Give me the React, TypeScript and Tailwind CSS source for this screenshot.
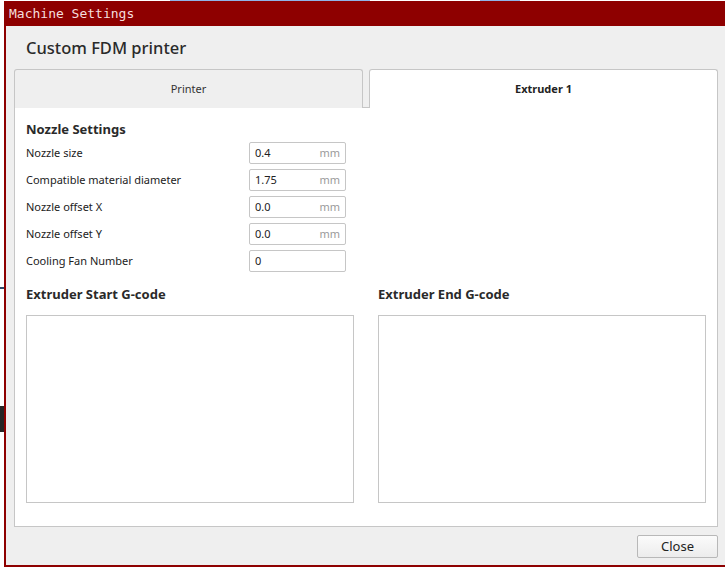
import React from "react";

const rows = [
  { label: "Nozzle size", value: "0.4", unit: "mm" },
  { label: "Compatible material diameter", value: "1.75", unit: "mm" },
  { label: "Nozzle offset X", value: "0.0", unit: "mm" },
  { label: "Nozzle offset Y", value: "0.0", unit: "mm" },
  { label: "Cooling Fan Number", value: "0", unit: "" },
];

export default function App() {
  return (
    <div
      className="relative w-[725px] h-[568px] overflow-hidden bg-white"
      style={{ fontFamily: '"Noto Sans", "Open Sans", sans-serif' }}
    >
      {/* desktop bits behind the window */}
      <div className="absolute left-[170px] top-0 w-[200px] h-px bg-[#8fb3e8]" />
      <div className="absolute left-[480px] top-0 w-[40px] h-px bg-[#8fb3e8]" />
      <div className="absolute left-0 top-[287px] w-[4px] h-[2px] bg-[#2c4a6a]" />
      <div className="absolute left-0 top-[406px] w-[4px] h-[26px] bg-[#262626]" />

      <div className="absolute left-[4px] top-[1px] w-[740px] h-[566px] flex flex-col border-l-2 border-b-2 border-[#8e0000] bg-[#efefef]">
        <div className="h-[25px] shrink-0 bg-[#8e0000] flex items-center pl-[3px]">
          <span
            className="text-[13px] text-[#f4dede] leading-none"
            style={{ fontFamily: '"DejaVu Sans Mono", monospace' }}
          >
            Machine Settings
          </span>
        </div>

        <div className="flex-1 flex flex-col pl-[8px] w-[712px]">
          <div className="h-[43px] flex items-center pl-[12px] pt-[1px]">
            <span className="text-[16.5px] font-medium text-[#2a2a2a] leading-none">Custom FDM printer</span>
          </div>

          {/* Tabs */}
          <div className="flex h-[39px] w-[704px] shrink-0 items-end">
            <div className="w-[349px] shrink-0 h-[39px] bg-[#efefef] border border-b-0 border-[#c6c6c6] rounded-t-[3px] flex items-center justify-center text-[11px] text-[#333]">
              Printer
            </div>
            <div className="w-[6px] shrink-0 h-full border-b border-[#c6c6c6]" />
            <div className="w-[349px] shrink-0 h-[39px] bg-white border border-b-0 border-[#c6c6c6] rounded-t-[3px] flex items-center justify-center text-[11px] font-bold text-[#222]">
              Extruder 1
            </div>
          </div>

          {/* Panel */}
          <div className="w-[704px] h-[419px] shrink-0 bg-white border border-t-0 border-[#c6c6c6] flex flex-col pl-[11px] pt-[12px]">
            <div className="text-[13px] font-bold text-[#2a2a2a] leading-[18px]">Nozzle Settings</div>
            <div className="flex flex-col gap-[5px] mt-[4px]">
              {rows.map((r) => (
                <div key={r.label} className="flex items-center h-[22px]">
                  <div className="w-[223px] text-[11px] text-[#222]">{r.label}</div>
                  <div className="w-[97px] h-[22px] border border-[#c6c6c6] rounded-[2px] flex items-center justify-between px-[5px]">
                    <span className="text-[11px] text-[#222]">{r.value}</span>
                    <span className="text-[11px] text-[#9a9a9a]">{r.unit}</span>
                  </div>
                </div>
              ))}
            </div>

            <div className="flex gap-[24px] mt-[13px]">
              <div className="flex flex-col">
                <div className="text-[13px] font-bold text-[#2a2a2a] leading-[18px]">Extruder Start G-code</div>
                <div className="mt-[12px] w-[328px] h-[188px] border border-[#c6c6c6]" />
              </div>
              <div className="flex flex-col">
                <div className="text-[13px] font-bold text-[#2a2a2a] leading-[18px]">Extruder End G-code</div>
                <div className="mt-[12px] w-[328px] h-[188px] border border-[#c6c6c6]" />
              </div>
            </div>
          </div>

          <div className="flex justify-end mt-[8px] w-[704px]">
            <button className="w-[81px] h-[23px] border border-[#b8b8b8] rounded-[2px] bg-gradient-to-b from-[#fbfbfb] to-[#ececec] text-[13px] text-[#222] leading-none">
              Close
            </button>
          </div>
        </div>
      </div>
    </div>
  );
}
